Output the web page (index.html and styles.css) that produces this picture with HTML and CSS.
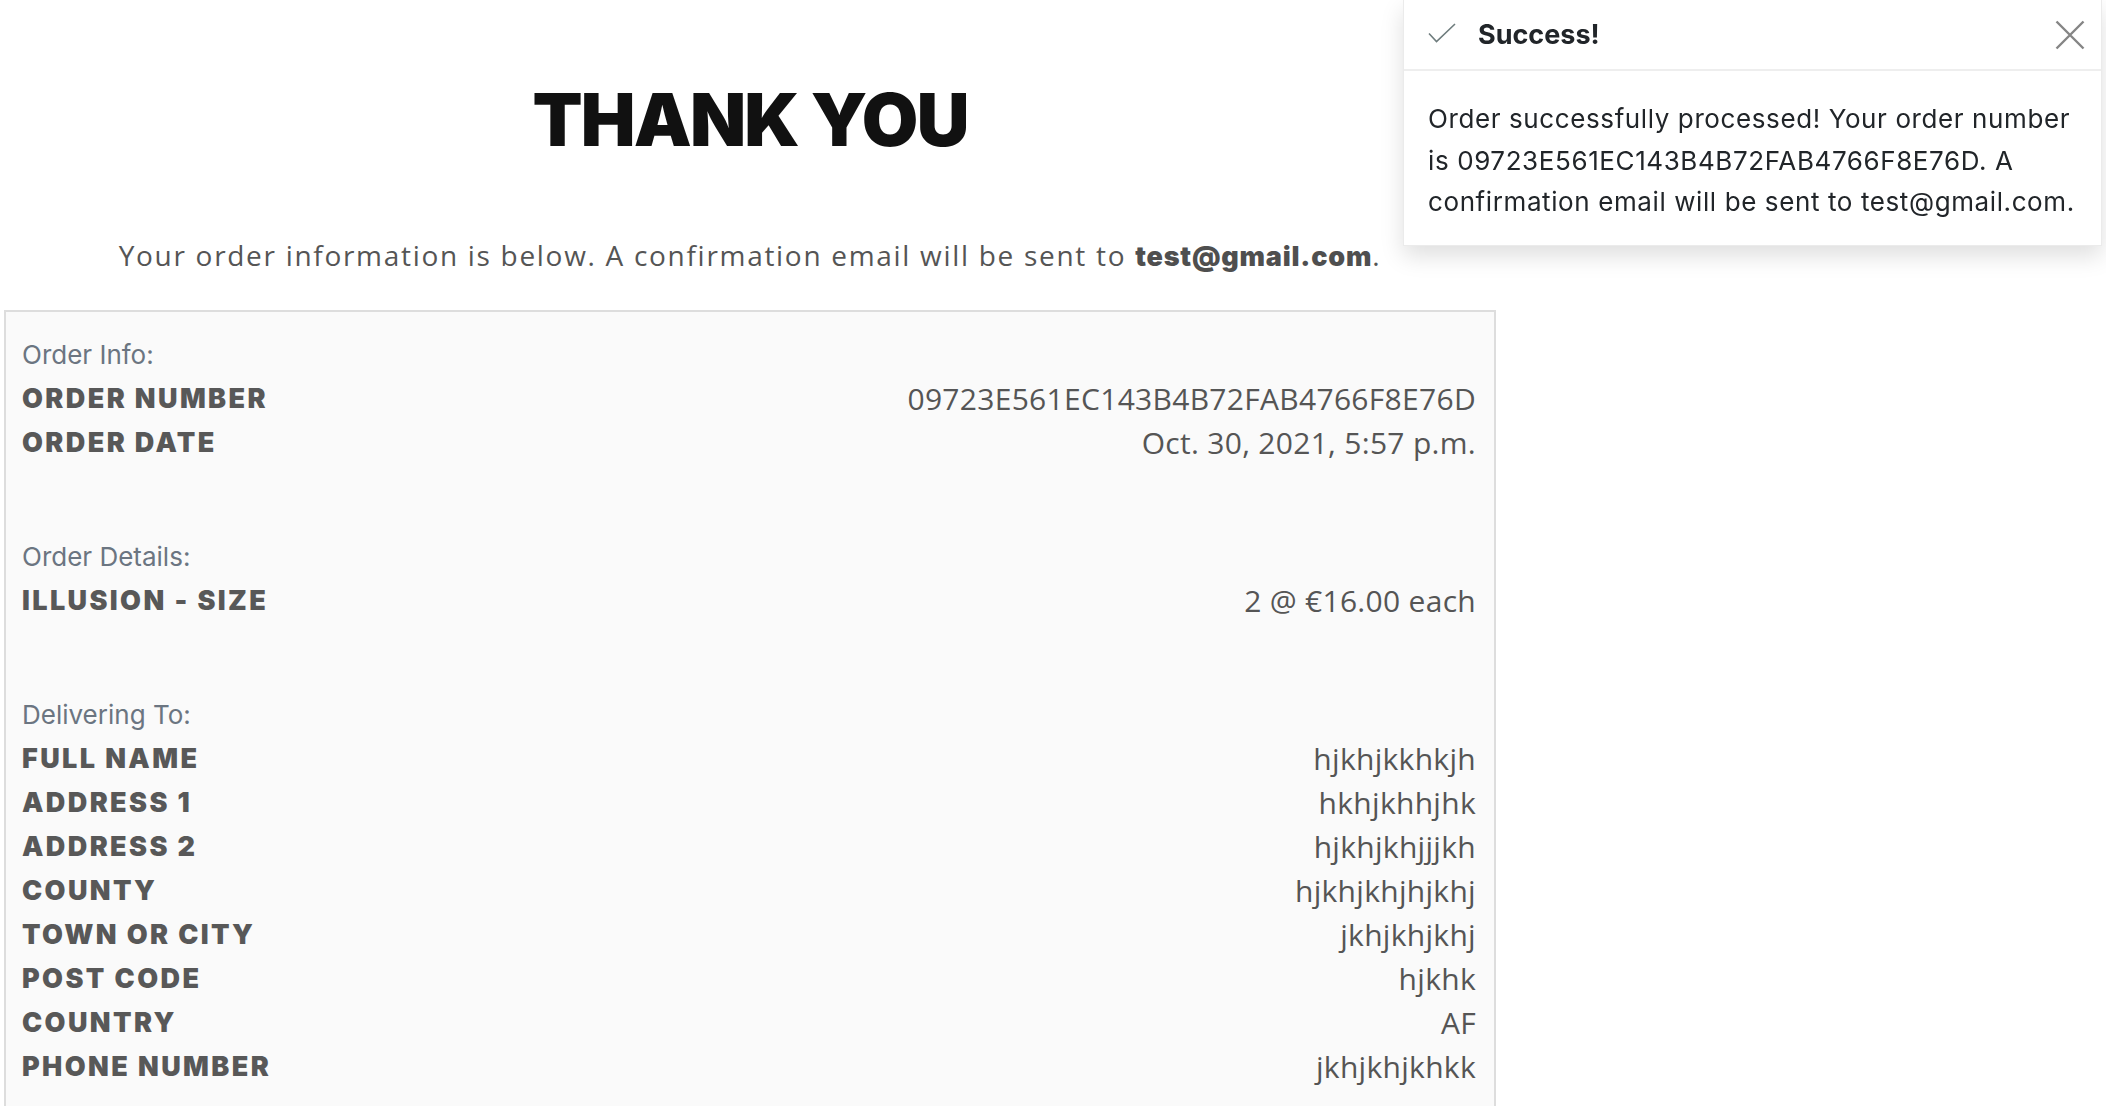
FILE: index.html
```html
<!DOCTYPE html>
<html lang="en">
<head>
<meta charset="utf-8">
<title>Thank You</title>
<link rel="stylesheet" href="styles.css">
</head>
<body>
<main class="page">
  <h1 class="title">THANK YOU</h1>
  <p class="lead">Your order information is below. A confirmation email will be sent to <strong>test@gmail.com</strong>.</p>
  <section class="order">
    <div class="group">
      <div class="group-title">Order Info:</div>
      <div class="row"><span class="label">ORDER NUMBER</span><span class="value">09723E561EC143B4B72FAB4766F8E76D</span></div>
      <div class="row"><span class="label">ORDER DATE</span><span class="value">Oct. 30, 2021, 5:57 p.m.</span></div>
    </div>
    <div class="group">
      <div class="group-title">Order Details:</div>
      <div class="row"><span class="label">ILLUSION - SIZE</span><span class="value">2 @ €16.00 each</span></div>
    </div>
    <div class="group">
      <div class="group-title">Delivering To:</div>
      <div class="row"><span class="label">FULL NAME</span><span class="value">hjkhjkkhkjh</span></div>
      <div class="row"><span class="label">ADDRESS 1</span><span class="value">hkhjkhhjhk</span></div>
      <div class="row"><span class="label">ADDRESS 2</span><span class="value">hjkhjkhjjjkh</span></div>
      <div class="row"><span class="label">COUNTY</span><span class="value">hjkhjkhjhjkhj</span></div>
      <div class="row"><span class="label">TOWN OR CITY</span><span class="value">jkhjkhjkhj</span></div>
      <div class="row"><span class="label">POST CODE</span><span class="value">hjkhk</span></div>
      <div class="row"><span class="label">COUNTRY</span><span class="value">AF</span></div>
      <div class="row"><span class="label">PHONE NUMBER</span><span class="value">jkhjkhjkhkk</span></div>
    </div>
  </section>
</main>

<div class="toast">
  <div class="toast-header">
    <svg class="toast-check" width="28" height="20" viewBox="0 0 28 20" aria-hidden="true">
      <path d="M1 10.5 L8.5 18.5 L27 1" fill="none" stroke="#6e7c7d" stroke-width="1.6"/>
    </svg>
    <strong class="toast-title">Success!</strong>
    <svg class="toast-close" width="30" height="30" viewBox="0 0 30 30" aria-hidden="true">
      <path d="M1.5 1.5 L28.5 28.5 M28.5 1.5 L1.5 28.5" fill="none" stroke="#858585" stroke-width="2.4"/>
    </svg>
  </div>
  <div class="toast-body">Order successfully processed! Your order number is 09723E561EC143B4B72FAB4766F8E76D. A confirmation email will be sent to test@gmail.com.</div>
</div>
</body>
</html>
```

FILE: styles.css
```css
html, body {
  margin: 0;
  padding: 0;
  background: #ffffff;
}

body {
  font-family: "Open Sans", "Liberation Sans", sans-serif;
  color: #555555;
}

.page {
  width: 1492px;
  margin-left: 4px;
  display: flex;
  flex-direction: column;
  align-items: stretch;
}

.title {
  margin: 83px 0 0 0;
  font-family: Inter, "Liberation Sans", sans-serif;
  font-weight: 900;
  font-size: 73px;
  line-height: 73px;
  letter-spacing: -1.8px;
  color: #111111;
  text-align: center;
}

.lead {
  margin: 78px 0 0 0;
  font-size: 28px;
  line-height: 42px;
  letter-spacing: 1.7px;
  color: #555555;
  text-align: center;
}

.lead strong {
  font-family: Inter, "Liberation Sans", sans-serif;
  font-weight: 900;
  font-size: 27px;
  letter-spacing: 0.8px;
  color: #4f4f4f;
}

.order {
  margin-top: 32px;
  background: #fafafa;
  border: 2px solid #dddddd;
  padding: 21px 18px 40px 16px;
  display: flex;
  flex-direction: column;
  gap: 70px;
}

.group {
  display: flex;
  flex-direction: column;
}

.group-title {
  font-family: Inter, "Liberation Sans", sans-serif;
  font-size: 26px;
  line-height: 44px;
  color: #6b7581;
}

.row {
  display: flex;
  justify-content: space-between;
  align-items: center;
  height: 44px;
}

.label {
  font-family: Inter, "Liberation Sans", sans-serif;
  font-weight: 900;
  font-size: 27px;
  letter-spacing: 2.4px;
  color: #585858;
  line-height: 44px;
}

.value {
  font-family: "Open Sans", "Liberation Sans", sans-serif;
  font-size: 30px;
  line-height: 44px;
  letter-spacing: 0.3px;
  color: #555555;
}

.toast {
  position: fixed;
  top: 0;
  right: 4px;
  width: 697px;
  background: #ffffff;
  border: 1px solid rgba(0, 0, 0, 0.08);
  border-top: none;
  box-shadow: 0 10px 22px rgba(0, 0, 0, 0.13);
  font-family: Inter, "Liberation Sans", sans-serif;
  color: #212529;
}

.toast-header {
  height: 69px;
  display: flex;
  align-items: center;
  padding: 0 16px 0 24px;
  border-bottom: 2px solid #eeeeee;
}

.toast-check {
  flex: none;
  margin-top: -4px;
}

.toast-title {
  margin-left: 22px;
  font-size: 27px;
  font-weight: 700;
  color: #212529;
}

.toast-close {
  margin-left: auto;
  flex: none;
  width: 30px;
  height: 30px;
}

.toast-body {
  padding: 27px 16px 22px 24px;
  font-size: 26px;
  line-height: 41.7px;
  letter-spacing: 0.6px;
  color: #212529;
}
```
